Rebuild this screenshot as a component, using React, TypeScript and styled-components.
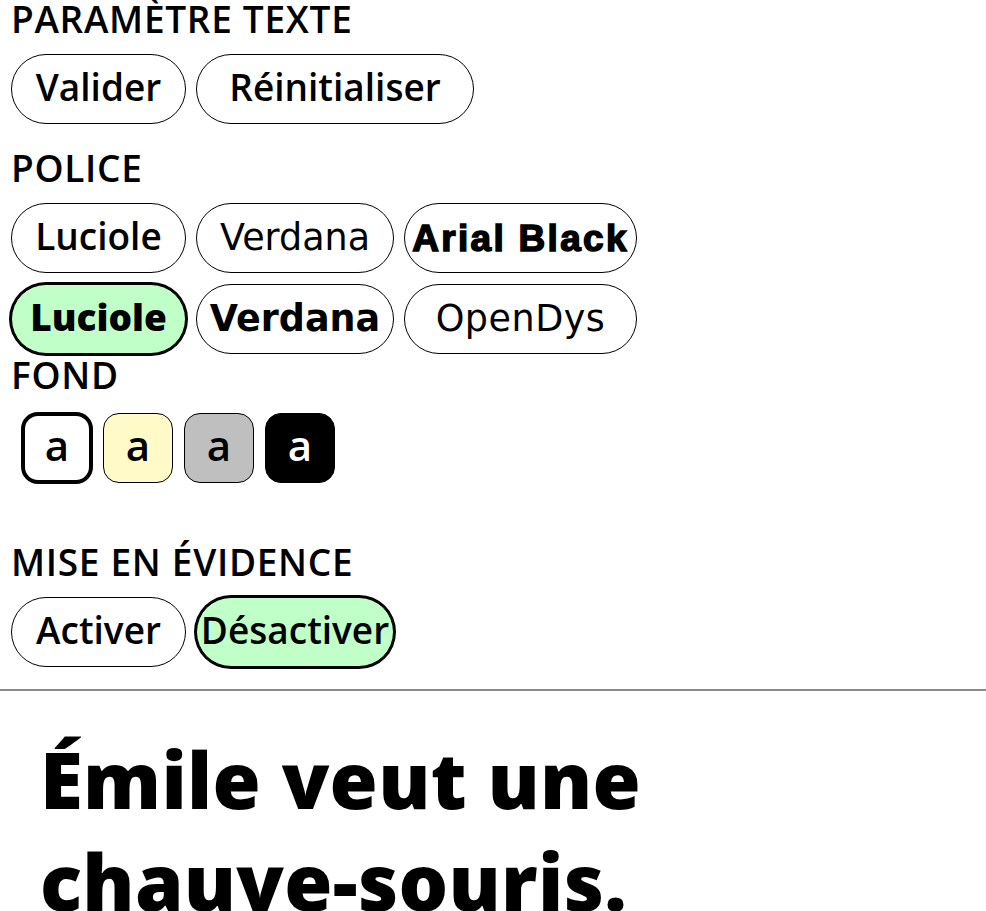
import React from "react";
import styled, { createGlobalStyle, css } from "styled-components";

const GlobalStyle = createGlobalStyle`
  html, body {
    margin: 0;
    padding: 0;
    background: #ffffff;
  }
  body {
    font-family: "Open Sans", "Noto Sans", sans-serif;
    color: #000000;
  }
`;

type Face = "luciole" | "lucioleBold" | "verdana" | "verdanaBold" | "arialBlack" | "openDys";

const faces: Record<Face, ReturnType<typeof css>> = {
  luciole: css`
    font-family: "Open Sans", sans-serif;
    font-weight: 600;
    font-size: 37px;
    padding-bottom: 6px;
  `,
  lucioleBold: css`
    font-family: "Open Sans", sans-serif;
    font-weight: 800;
    font-size: 37px;
    padding-bottom: 6px;
  `,
  verdana: css`
    font-family: "DejaVu Sans", sans-serif;
    font-weight: 400;
    font-size: 36.5px;
  `,
  verdanaBold: css`
    font-family: "DejaVu Sans", sans-serif;
    font-weight: 700;
    font-size: 36.5px;
  `,
  arialBlack: css`
    font-family: "Liberation Sans", Arial, sans-serif;
    font-weight: 700;
    font-size: 37px;
    letter-spacing: 2.3px;
    -webkit-text-stroke: 1.5px #000;
  `,
  openDys: css`
    font-family: "DejaVu Sans", sans-serif;
    font-weight: 400;
    font-size: 36.5px;
    letter-spacing: 0.5px;
  `,
};

const Page = styled.main`
  display: flex;
  flex-direction: column;
`;

const Panel = styled.div`
  display: flex;
  flex-direction: column;
  padding: 0 0 0 11px;
`;

const Section = styled.section<{ $after: number }>`
  display: flex;
  flex-direction: column;
  gap: 17px;
  margin-bottom: ${(p) => p.$after}px;
`;

const Heading = styled.h2`
  margin: 0;
  font-family: "Open Sans", sans-serif;
  font-weight: 600;
  font-size: 37px;
  line-height: 37px;
  letter-spacing: 0.7px;
`;

const ButtonGrid = styled.div<{ $cols: string }>`
  display: grid;
  grid-template-columns: ${(p) => p.$cols};
  column-gap: 10px;
  row-gap: 11px;
  justify-content: start;
`;

const Pill = styled.button<{ $face: Face; $active?: boolean }>`
  box-sizing: border-box;
  height: 70px;
  padding: 0;
  margin: 0;
  display: flex;
  align-items: center;
  justify-content: center;
  white-space: nowrap;
  color: #000;
  border: 1px solid #000;
  border-radius: 35px;
  background: ${(p) => (p.$active ? "#c0ffc8" : "#ffffff")};
  box-shadow: ${(p) => (p.$active ? "0 0 0 2px #000" : "none")};
  line-height: 1;
  ${(p) => faces[p.$face]}
`;

const SwatchRow = styled.div`
  display: flex;
  gap: 11px;
  padding: 3px 0 0 11px;
`;

const Swatch = styled.button<{ $bg: string; $fg: string; $active?: boolean }>`
  box-sizing: border-box;
  width: 70px;
  height: 70px;
  margin: 0;
  padding: 0 0 6px;
  display: flex;
  align-items: center;
  justify-content: center;
  border: ${(p) => (p.$active ? "3px" : "1px")} solid #000;
  border-radius: 16px;
  background: ${(p) => p.$bg};
  color: ${(p) => p.$fg};
  box-shadow: ${(p) => (p.$active ? "0 0 0 1px #000" : "none")};
  font-family: "Open Sans", sans-serif;
  font-weight: 600;
  font-size: 42px;
  line-height: 1;
`;

const Divider = styled.hr`
  margin: 22px 0 0;
  border: 0;
  border-top: 2px solid #8a8a8a;
  width: 100%;
`;

const Sample = styled.p`
  margin: 37px 0 0;
  padding-left: 40px;
  max-width: 760px;
  font-family: "Open Sans", sans-serif;
  font-weight: 800;
  font-size: 78px;
  line-height: 102px;
  letter-spacing: 0.3px;
`;

const swatches = [
  { bg: "#ffffff", fg: "#000000", active: true },
  { bg: "#fffac8", fg: "#000000" },
  { bg: "#bfbfbf", fg: "#000000" },
  { bg: "#000000", fg: "#ffffff" },
];

export default function App() {
  return (
    <Page>
      <GlobalStyle />
      <Panel>
        <Section $after={25}>
          <Heading>PARAMÈTRE TEXTE</Heading>
          <ButtonGrid $cols="175px 278px">
            <Pill $face="luciole">Valider</Pill>
            <Pill $face="luciole">Réinitialiser</Pill>
          </ButtonGrid>
        </Section>
        <Section $after={2}>
          <Heading>POLICE</Heading>
          <ButtonGrid $cols="175px 198px 233px">
            <Pill $face="luciole">Luciole</Pill>
            <Pill $face="verdana">Verdana</Pill>
            <Pill $face="arialBlack">Arial Black</Pill>
            <Pill $face="lucioleBold" $active>
              Luciole
            </Pill>
            <Pill $face="verdanaBold">Verdana</Pill>
            <Pill $face="openDys">OpenDys</Pill>
          </ButtonGrid>
        </Section>
        <Section $after={60}>
          <Heading>FOND</Heading>
          <SwatchRow>
            {swatches.map((s, i) => (
              <Swatch key={i} $bg={s.bg} $fg={s.fg} $active={s.active}>
                a
              </Swatch>
            ))}
          </SwatchRow>
        </Section>
        <Section $after={0}>
          <Heading>MISE EN ÉVIDENCE</Heading>
          <ButtonGrid $cols="175px 198px">
            <Pill $face="luciole">Activer</Pill>
            <Pill $face="luciole" $active>
              Désactiver
            </Pill>
          </ButtonGrid>
        </Section>
      </Panel>
      <Divider />
      <Sample>Émile veut une chauve-souris.</Sample>
    </Page>
  );
}
